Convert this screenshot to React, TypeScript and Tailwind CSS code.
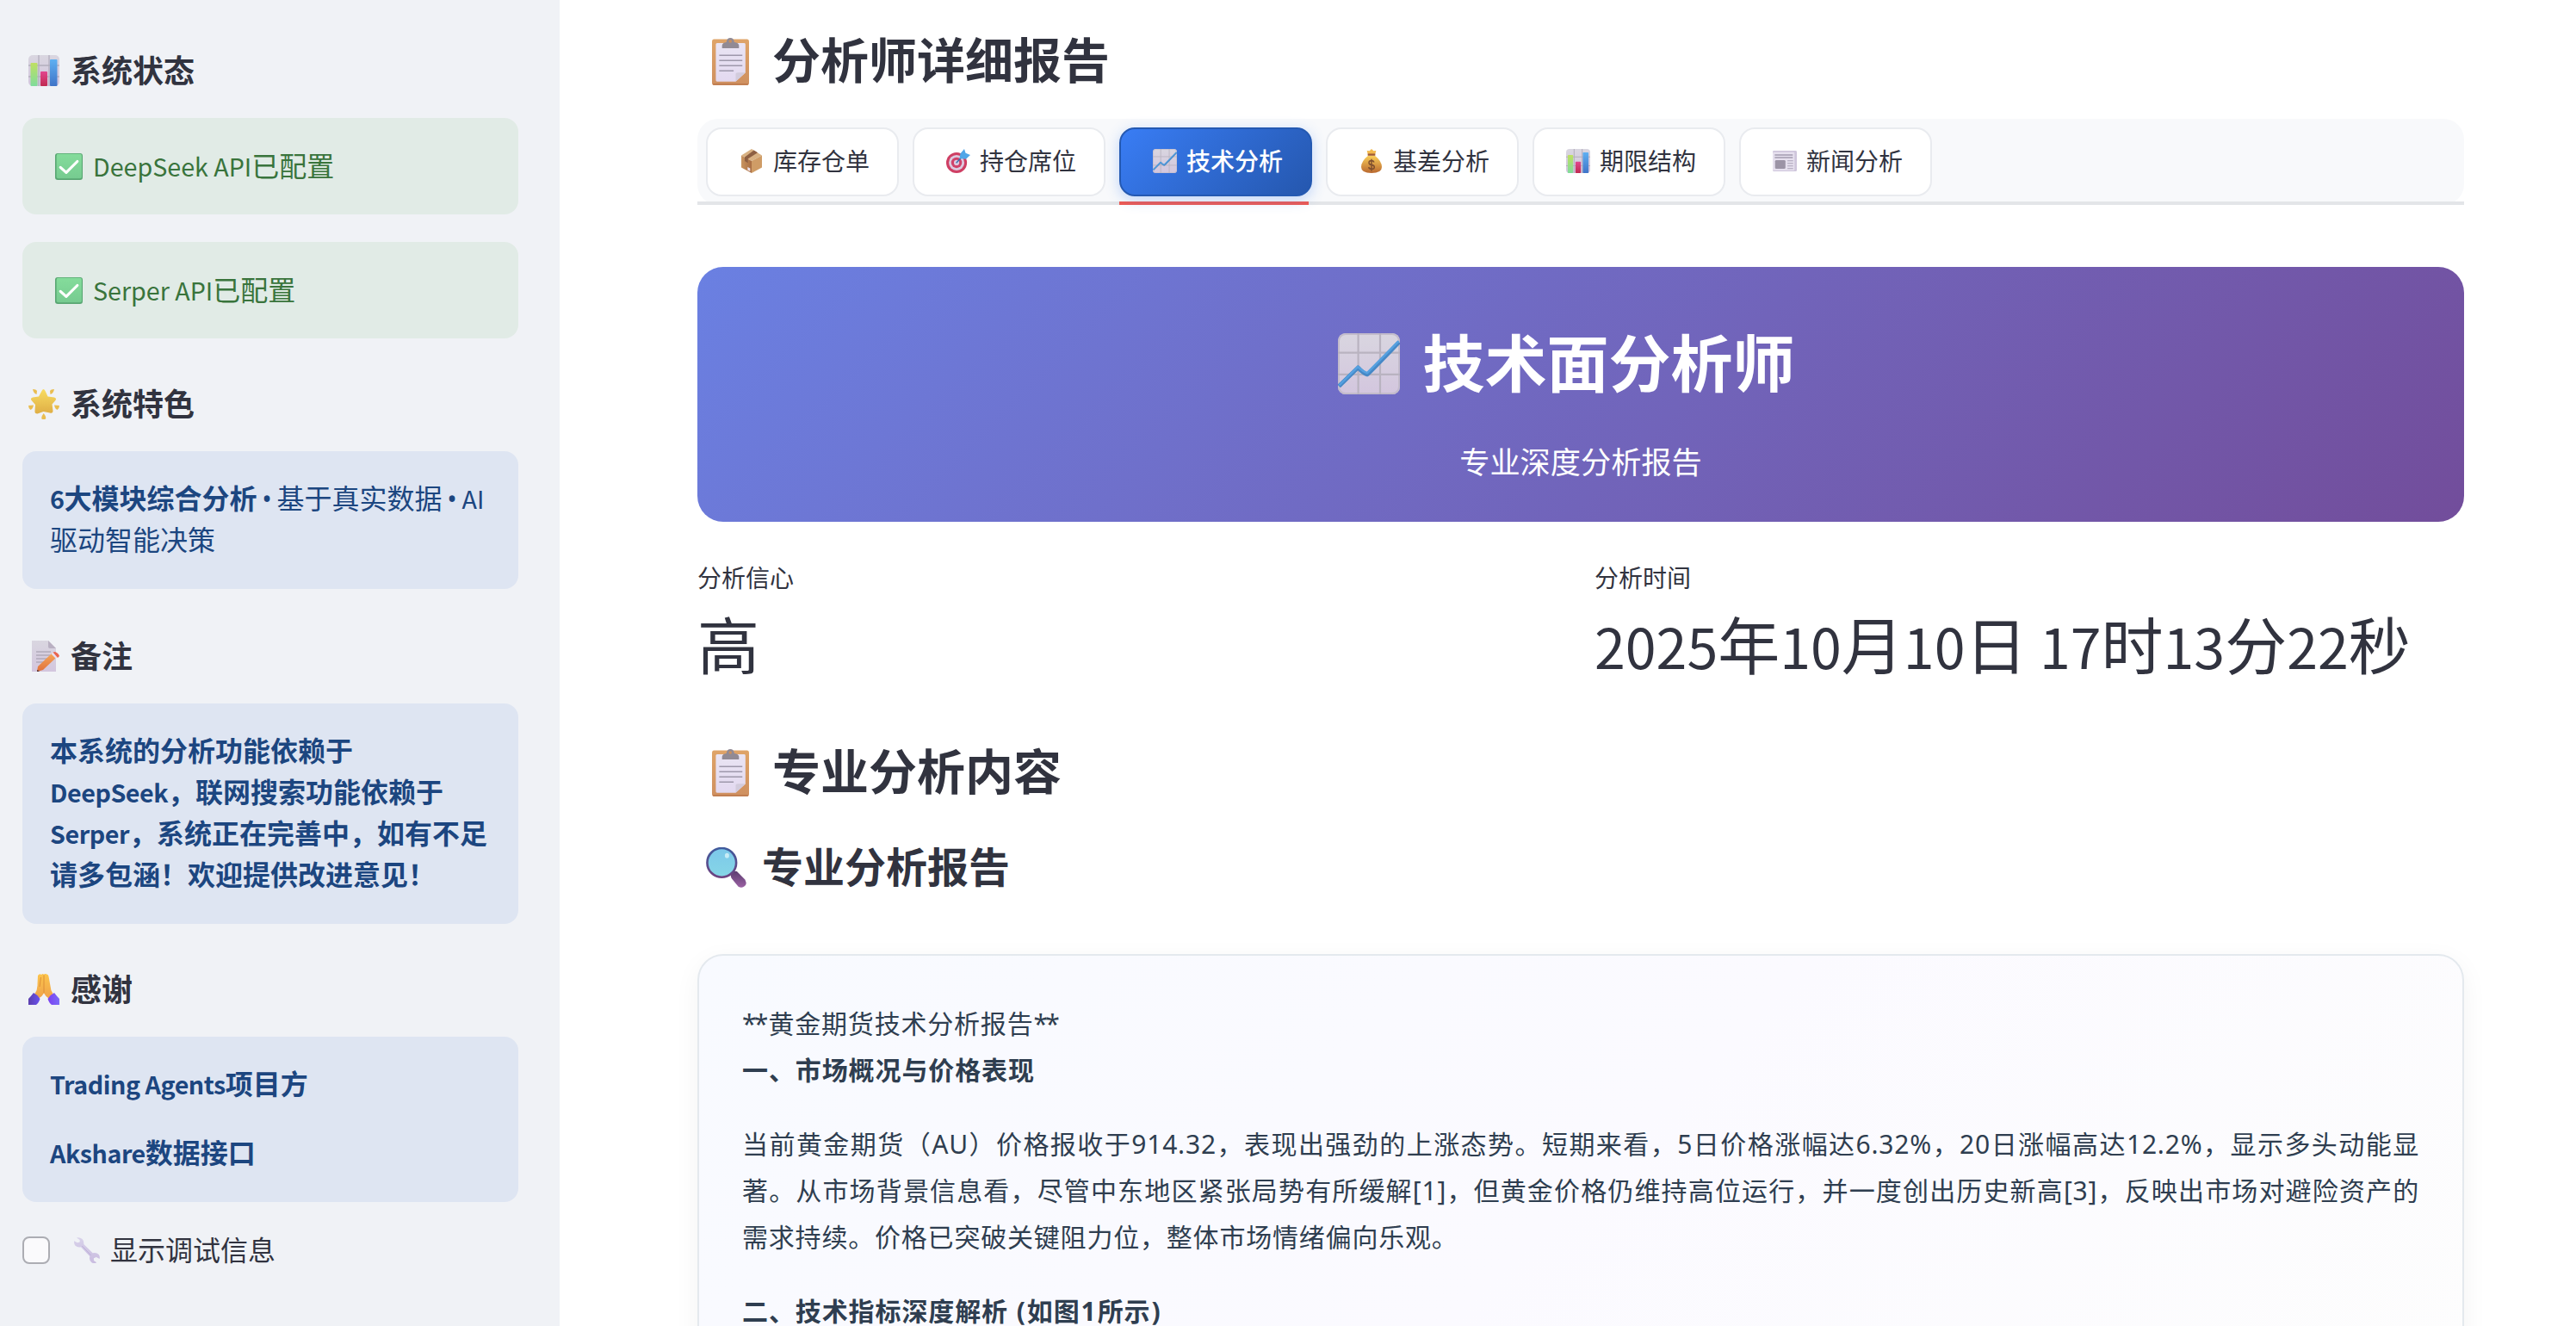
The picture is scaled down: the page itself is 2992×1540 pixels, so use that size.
import type { ReactNode } from "react";

/* Shared gradients for the emoji-style glyphs */
function Defs() {
  const stops = (id: string, a: string, b: string, horizontal = false) => (
    <linearGradient id={id} x1="0" y1="0" x2={horizontal ? "1" : "0"} y2={horizontal ? "0" : "1"}>
      <stop offset="0" stopColor={a} />
      <stop offset="1" stopColor={b} />
    </linearGradient>
  );
  return (
    <svg className="absolute h-0 w-0" aria-hidden="true">
      <defs>
        {stops("paper", "#d9d6e0", "#d3c6de")}
        {stops("sheet", "#e9e4f3", "#e3d9f0")}
        {stops("lime", "#bfe062", "#7fdc9c")}
        {stops("rose", "#e2478f", "#c02a50")}
        {stops("sky", "#5fb0f2", "#3f74c8")}
        {stops("green", "#84dc9b", "#76cb90")}
        {stops("star", "#f8dc62", "#dfae45")}
        {stops("board", "#dfa468", "#cf9060")}
        {stops("pencil", "#f6a95a", "#e0703c")}
        {stops("hand", "#fcc54c", "#efa24a")}
        {stops("violetL", "#5b3fae", "#6b52f0", true)}
        {stops("violetR", "#7b3ff0", "#7a6af8", true)}
        {stops("wrench", "#d8d2ea", "#c9bce0")}
        {stops("lens", "#7cc8ea", "#86d6e6")}
        {stops("rim", "#3f5a9c", "#6f4380")}
        {stops("grip", "#5c3d70", "#9c62a4")}
        {stops("bag", "#fbd05a", "#b9682f")}
        {stops("boxL", "#c99561", "#a86d43", true)}
      </defs>
    </svg>
  );
}

function Svg({ className, children }: { className: string; children: ReactNode }) {
  return (
    <svg className={`block shrink-0 ${className}`} viewBox="0 0 36 36" preserveAspectRatio="none" aria-hidden="true">
      {children}
    </svg>
  );
}

type IconProps = { className: string };

const BarChart = ({ className }: IconProps) => (
  <Svg className={className}>
    <rect width="36" height="36" rx="5" fill="url(#paper)" />
    <path d="M12 0V36M24 0V36M0 12H36M0 25H36" stroke="#b3aebd" strokeWidth="1.3" />
    <rect x="2.5" y="9" width="8" height="27" rx="1" fill="url(#lime)" />
    <rect x="14" y="19" width="8" height="17" rx="1" fill="url(#rose)" />
    <rect x="25" y="5" width="8.5" height="31" rx="1" fill="url(#sky)" />
  </Svg>
);

const LineChart = ({ className }: IconProps) => (
  <Svg className={className}>
    <rect width="36" height="36" rx="4.5" fill="url(#paper)" />
    <rect x=".5" y=".5" width="35" height="35" rx="4" fill="none" stroke="#c3bccb" />
    <path d="M11.8 0V36M24.5 0V36M0 11.5H36M0 24.3H36" stroke="#b9b3c0" strokeWidth="1.1" />
    <path d="M.6 31.2L11.7 20.2Q14.5 23.4 17 24.3Q19 22.6 35.5 5.2" fill="none" stroke="#4688c6" strokeWidth="2.4" strokeLinejoin="round" />
    <path d="M.8 30.6L11.6 19.7Q14.5 22.6 17 23.4L35.3 4.6" fill="none" stroke="#55a0e0" strokeWidth="1.3" strokeLinejoin="round" />
  </Svg>
);

const CheckMark = ({ className }: IconProps) => (
  <Svg className={className}>
    <rect width="36" height="36" rx="3.5" fill="#58a672" />
    <rect x="1.8" y="1" width="33" height="33" rx="2.5" fill="url(#green)" />
    <path d="M7 19L14.5 26L29 11" fill="none" stroke="#fff" strokeWidth="3.6" strokeLinecap="round" strokeLinejoin="round" />
  </Svg>
);

const GlowingStar = ({ className }: IconProps) => (
  <Svg className={className}>
    <path
      d="M17.5 1Q18.800 1 20 4L22.500 9.500L30 10.500Q33.500 11.500 31 14.500L27.500 18.500L28.500 26Q28.500 29.500 25 28.500L17.500 27L10.500 29.500Q7 29.500 7.500 26L8 19L4 14.500Q1.500 11.500 5 10.500L12 9.500L15 4Q16.200 1 17.500 1Z"
      fill="url(#star)"
    />
    <g fill="#e9bd50">
      <path d="M5 1Q9 1 10 3L9.500 7Q6 6 5 1Z" />
      <path d="M30 1Q26 1 25 3L25.500 7Q29 6 30 1Z" />
      <path d="M0 20L6 19.500Q5 24 2.500 25Q0 23 0 20Z" />
      <path d="M36 20L30 19.500Q31 24 33.500 25Q36 23 36 20Z" />
      <path d="M17.700 29Q21 33 20 35.500Q17.700 37 15.500 35.500Q14.500 33 17.700 29Z" />
    </g>
  </Svg>
);

const Memo = ({ className }: IconProps) => (
  <Svg className={className}>
    <path d="M4 0H23L32 9V36H4Z" fill="url(#paper)" />
    <path d="M23 0L32 9H25Q23 9 23 7Z" fill="#b9b0c2" />
    <path d="M9 13H26M9 17H25M9 21H22M9 25H18" stroke="#9d97a8" strokeWidth="1.1" />
    <path d="M10 36L11 30L28 14L33 19L17 34Z" fill="url(#pencil)" />
    <path d="M26.500 15.500L28.500 13.500L34 18.500L32 21Z" fill="#e8dff0" />
    <path d="M28.500 13.500L31 13Q35 14.500 36 18L34 20Z" fill="#e9644f" />
    <path d="M10 36L10.300 34L13 35.500Z" fill="#40262c" />
  </Svg>
);

const FoldedHands = ({ className }: IconProps) => (
  <Svg className={className}>
    <path d="M11 2Q13-1 15 1Q17-1 18 1Q19-1 21 0.500Q23 0 23.500 3L25.500 14Q25.500 19 29 24L23.500 28.500Q20.500 27 18 22.500Q15.500 27 12 28.500L7 24Q11 18 10.500 12Z" fill="url(#hand)" />
    <path d="M18 1.500V22M14.500 4L13 15" stroke="#d98a35" strokeWidth=".9" fill="none" />
    <path d="M6 22Q11 24.500 13.500 29Q12 34 9 36H0V29Q3 26 6 22Z" fill="url(#violetL)" />
    <path d="M30 22Q25 24.500 22.500 29Q24 34 27 36H36V29Q33 26 30 22Z" fill="url(#violetR)" />
  </Svg>
);

const Wrench = ({ className }: IconProps) => (
  <Svg className={className}>
    <path
      d="M3.500 0.500Q8-.5 11.500 2.500Q14 5 13.500 9.500L26 22Q31 20.500 34.500 24Q36.500 27 35.500 30L31 27.500L27.500 29V32.500L31.500 35Q28 37 24.500 35Q20.500 32 22 26.500L9.500 13.500Q5 14.500 1.500 11.500Q-.5 8.500 .3 5L4.500 7.500L8 6.500V3.500Z"
      fill="url(#wrench)"
    />
    <path d="M11 12L23.500 25" stroke="#b8aad6" strokeWidth="1" />
  </Svg>
);

const Clipboard = ({ className }: IconProps) => (
  <Svg className={className}>
    <rect y="1" width="36" height="35" rx="2" fill="url(#board)" />
    <path d="M.8 35.200H35.200" stroke="#b9744a" strokeWidth=".8" />
    <path d="M5 4H31.500Q32.500 4 32.500 5V26.500L23 33.200H5Q3.700 33.200 3.700 32V5Q3.700 4 5 4Z" fill="url(#sheet)" />
    <path d="M32.500 26.300L23 33.200V27.500Q23 26.300 25 26.300Z" fill="#d2cbdc" />
    <path d="M7 13.300H29.500M7 17.200H29.500M7 21.100H29.500M7 25H21" stroke="#9e98ab" strokeWidth="1" />
    <path d="M9.800 7.800V5.800Q10 3.800 14 3.300Q14.500 0 17.800 0Q21.200 0 21.700 3.300Q26 3.800 26.200 5.800V7.800Z" fill="#918a94" />
    <ellipse cx="17.800" cy="2.600" rx="1.500" ry="1.100" fill="#c98f5e" />
  </Svg>
);

const Magnifier = ({ className }: IconProps) => (
  <Svg className={className}>
    <path d="M22.500 23.500Q24 20.500 27.500 21.500L34.500 28.500Q37 32 34.500 34.500Q32 37 28.800 35L23 28Q21.500 26 22.500 23.500Z" fill="url(#grip)" />
    <circle cx="14" cy="13.700" r="12.900" fill="url(#lens)" stroke="url(#rim)" strokeWidth="2" />
    <ellipse cx="18.700" cy="7.400" rx="1.900" ry="2.200" fill="#c8ecf6" />
  </Svg>
);

const Package = ({ className }: IconProps) => (
  <Svg className={className}>
    <path d="M18 0L36 9.500L18 18L0 9.500Z" fill="#d8b183" />
    <path d="M0 9.500L18 18V36L0 27.500Z" fill="url(#boxL)" />
    <path d="M36 9.500L18 18V36L36 27.500Z" fill="#cf9c66" />
    <path d="M22 2L28.500 5.500L11.500 14.800V21L6 18V12.300Z" fill="#8d5f42" />
    <path d="M11 27L15.500 29V33.500L11 31.500Z" fill="#ece3ee" />
  </Svg>
);

const Target = ({ className }: IconProps) => (
  <Svg className={className}>
    <ellipse cx="15.500" cy="20.500" rx="15.500" ry="15.500" fill="#cf3f64" />
    <ellipse cx="15.500" cy="20.500" rx="11.600" ry="11.600" fill="#dccbe0" />
    <ellipse cx="15.500" cy="20.500" rx="8" ry="8" fill="#d0436a" />
    <ellipse cx="15.500" cy="20.500" rx="4" ry="4" fill="#dccbe0" />
    <path d="M15 21L27 8" stroke="#3a72b0" strokeWidth="1.800" />
    <path d="M20 14L21 7L27 0L29 6L36 9L29.500 15Z" fill="#4fa6e8" />
  </Svg>
);

const MoneyBag = ({ className }: IconProps) => (
  <Svg className={className}>
    <path d="M12 9L10 2.500L14.500 3L18 0L21.500 3L26 2.500L24 9Z" fill="#f2b84b" />
    <path d="M12.500 9.500H23.500Q36 18 36 27Q36 36 18 36Q0 36 0 27Q0 18 12.500 9.500Z" fill="url(#bag)" />
    <path d="M11.500 7H24.500V10H11.500Z" fill="#a05a35" />
    <path d="M22.500 20Q21.500 17.500 18 17.500Q13.500 17.500 13.500 20.500Q13.500 23 18 23.700Q23 24.500 23 27.300Q23 30 18 30Q14 30 13 27.200M18 15V33" fill="none" stroke="#80502f" strokeWidth="2.200" />
  </Svg>
);

const Newspaper = ({ className }: IconProps) => (
  <Svg className={className}>
    <rect width="36" height="36" rx="2" fill="#cfc6dc" />
    <rect y="2.500" width="32.500" height="32" rx="1.500" fill="#e6e0ee" />
    <path d="M3 7.500H30M3 12H30" stroke="#a29bb0" strokeWidth="2" />
    <path d="M22 17.500H30.500M22 22H30.500M22 26.500H30.500M22 31H30.500" stroke="#aaa2b8" strokeWidth="1.400" />
    <rect x="3.500" y="16.500" width="15.500" height="15" rx="2" fill="#9c94a6" />
  </Svg>
);

/* Latin runs are set slightly smaller than the surrounding Han characters */
const L = ({ children }: { children: ReactNode }) => <span className="text-[0.896em] leading-none">{children}</span>;

/* Bold Latin runs, tightened a little */
const LB = ({ children }: { children: ReactNode }) => (
  <span className="text-[0.896em] leading-none tracking-[-0.45px]">{children}</span>
);

const Bullet = () => (
  <span className="inline-block w-[23px] text-center font-['Open_Sans',sans-serif] text-[32px] leading-none">•</span>
);

const SideHeading = ({ className, icon, children }: { className: string; icon: ReactNode; children: ReactNode }) => (
  <div className={`flex items-end pb-[35px] pl-[7px] ${className}`}>
    <div className="flex items-center">
      {icon}
      <h3 className="ml-[13px] text-[36px] leading-[44px] font-bold whitespace-nowrap">{children}</h3>
    </div>
  </div>
);

const Success = ({ children }: { children: ReactNode }) => (
  <div className="flex h-28 items-center rounded-2xl bg-[#e1ebe6] pl-[38px] text-[32px] leading-[48px] text-[#39743c]">
    <CheckMark className="h-[31px] w-8" />
    <span className="mb-[5px] ml-3 whitespace-nowrap">{children}</span>
  </div>
);

const Info = ({ className = "", children }: { className?: string; children: ReactNode }) => (
  <div className={`rounded-2xl bg-[#dee5f2] px-8 pt-[29px] pb-[35px] text-[32px] leading-[48px] whitespace-nowrap text-[#1c4680] ${className}`}>
    {children}
  </div>
);

function Sidebar() {
  return (
    <aside className="w-[650px] shrink-0 bg-[#f0f2f6] pr-12 pl-[26px]">
      <SideHeading className="h-[137px]" icon={<BarChart className="mt-[3px] h-9 w-9" />}>系统状态</SideHeading>
      <div className="flex flex-col gap-8">
        <Success><L>DeepSeek API</L>已配置</Success>
        <Success><L>Serper API</L>已配置</Success>
      </div>

      <SideHeading className="h-[131px]" icon={<GlowingStar className="mt-[3px] h-9 w-9" />}>系统特色</SideHeading>
      <Info>
        <p className="h-12"><b><LB>6</LB>大模块综合分析</b><Bullet />基于真实数据<Bullet /><L>AI</L></p>
        <p>驱动智能决策</p>
      </Info>

      <SideHeading className="h-[133px]" icon={<Memo className="mt-[3px] h-9 w-9" />}>备注</SideHeading>
      <Info className="font-bold">
        <p>本系统的分析功能依赖于</p>
        <p><LB>DeepSeek</LB>，联网搜索功能依赖于</p>
        <p><LB>Serper</LB>，系统正在完善中，如有不足</p>
        <p>请多包涵！欢迎提供改进意见！</p>
      </Info>

      <SideHeading className="h-[131px]" icon={<FoldedHands className="mt-[3px] h-9 w-9" />}>感谢</SideHeading>
      <Info className="flex flex-col gap-8 font-bold">
        <p><LB>Trading Agents</LB>项目方</p>
        <p><LB>Akshare</LB>数据接口</p>
      </Info>

      <label className="mt-8 flex h-12 items-center text-[32px] leading-[48px]">
        <span className="block h-8 w-8 shrink-0 rounded-lg border-2 border-[#acadb3] bg-[#fafafc]" />
        <Wrench className="ml-7 h-[30px] w-[30px]" />
        <span className="mb-[5px] ml-3 whitespace-nowrap">显示调试信息</span>
      </label>
    </aside>
  );
}

const tabs = [
  { label: "库存仓单", icon: <Package className="ml-[2px] mr-[2px] h-7 w-6" /> },
  { label: "持仓席位", icon: <Target className="h-7 w-7" /> },
  { label: "技术分析", icon: <LineChart className="h-7 w-7" />, active: true },
  { label: "基差分析", icon: <MoneyBag className="ml-[2px] mr-[2px] h-7 w-6" /> },
  { label: "期限结构", icon: <BarChart className="h-7 w-7" /> },
  { label: "新闻分析", icon: <Newspaper className="h-6 w-7" /> },
];

function Tabs() {
  return (
    <nav className="relative mt-[38px] flex h-[100px] gap-4 rounded-3xl bg-[#f8f9fb] px-2.5 pt-2.5">
      <div className="absolute inset-x-0 bottom-0 h-1 bg-[#e3e5e8]" />
      <div className="absolute bottom-0 left-[490px] h-1 w-[220px] bg-[#ef5951]" />
      {tabs.map((tab) => (
        <button
          key={tab.label}
          className={
            tab.active
              ? "relative flex h-20 w-56 items-center rounded-[18px] border-2 border-[#2459b2] bg-linear-135 from-[#397df5] to-[#2557ae] pb-[2px] pl-[37px] text-white shadow-[0_4px_16px_rgba(59,130,246,0.3)]"
              : "flex h-20 w-56 items-center rounded-[18px] border-2 border-[#e9ebef] bg-white pb-[2px] pl-[37px]"
          }
        >
          {tab.icon}
          <span className={`mb-[2px] ml-[11px] text-[28px] leading-[42px] whitespace-nowrap ${tab.active ? "font-medium" : ""}`}>{tab.label}</span>
        </button>
      ))}
    </nav>
  );
}

const Metric = ({ label, children }: { label: string; children: ReactNode }) => (
  <div className="text-[#31333f]">
    <div className="text-[28px] leading-[42px]">{label}</div>
    <div className="mt-px mb-[3px] text-[72px] leading-[108px] whitespace-nowrap">{children}</div>
  </div>
);

function Report() {
  return (
    <article className="mt-[74px] h-[520px] rounded-[30px] border-2 border-[#e4e9ee] bg-linear-135 from-[#f8faff] via-[#fbfaff] to-[#fdfdfd] px-[50px] pt-[52px] font-['Noto_Sans','Noto_Sans_CJK_SC',sans-serif] text-[30px] leading-[54px] tracking-[0.8px] whitespace-nowrap text-[#2f3e50] shadow-[0_8px_30px_rgba(0,0,0,0.05)]">
      <p><span className="tracking-[-2.8px]">**</span><span className="ml-[3px]">黄金期货技术分析报告</span><span className="tracking-[-2.8px]">**</span></p>
      <p className="font-bold tracking-[0.9px]">一、市场概况与价格表现</p>
      <div className="mt-8">
        <p className="[text-align-last:justify]">当前黄金期货（AU）价格报收于914.32，表现出强劲的上涨态势。短期来看，5日价格涨幅达6.32%，20日涨幅高达12.2%，显示多头动能显</p>
        <p className="[text-align-last:justify]">著。从市场背景信息看，尽管中东地区紧张局势有所缓解[1]，但黄金价格仍维持高位运行，并一度创出历史新高[3]，反映出市场对避险资产的</p>
        <p>需求持续。价格已突破关键阻力位，整体市场情绪偏向乐观。</p>
      </div>
      <p className="mt-8 font-bold tracking-[0.9px]">二、技术指标深度解析 <span className="ml-px mr-px">(</span>如图<span className="mx-px">1</span>所示<span className="ml-px">)</span></p>
    </article>
  );
}

export default function App() {
  return (
    <div lang="zh-CN" className="flex h-[1540px] w-[2992px] overflow-hidden bg-white font-['Noto_Sans_CJK_SC',sans-serif] text-[#31333f]">
      <Defs />
      <Sidebar />
      <main className="flex-1 pr-[130px] pl-40">
        <div className="flex h-[100px] items-end pl-[17px]">
          <div className="flex items-center">
            <Clipboard className="mt-[8px] h-[55px] w-[43px]" />
            <h2 className="ml-[27px] text-[56px] leading-[66px] font-bold">分析师详细报告</h2>
          </div>
        </div>
        <Tabs />

        <section className="mt-[72px] flex h-[296px] flex-col items-center rounded-[30px] bg-linear-135 from-[#6a80e2] to-[#724d9b] text-white">
          <div className="mt-[63px] mr-[33px] flex items-center">
            <LineChart className="mt-[9px] h-[71px] w-[72px]" />
            <h1 className="ml-[26px] text-[72px] leading-[90px] font-bold">技术面分析师</h1>
          </div>
          <p className="mt-[45px] text-[35.2px] leading-[54px]">专业深度分析报告</p>
        </section>

        <div className="mt-[43px] grid grid-cols-2 gap-8">
          <Metric label="分析信心">高</Metric>
          <Metric label="分析时间"><L>2025</L>年<L>10</L>月<L>10</L>日<L> 17</L>时<L>13</L>分<L>22</L>秒</Metric>
        </div>

        <div className="mt-[56px] flex items-center pl-[17px]">
          <Clipboard className="mt-[8px] h-[55px] w-[43px]" />
          <h2 className="ml-[27px] text-[56px] leading-[68px] font-bold">专业分析内容</h2>
        </div>
        <div className="mt-[47px] flex items-center pl-[10px]">
          <Magnifier className="mt-[6px] h-[47px] w-[47px]" />
          <h3 className="ml-[18px] text-[48px] leading-[60px] font-bold">专业分析报告</h3>
        </div>
        <Report />
      </main>
    </div>
  );
}
